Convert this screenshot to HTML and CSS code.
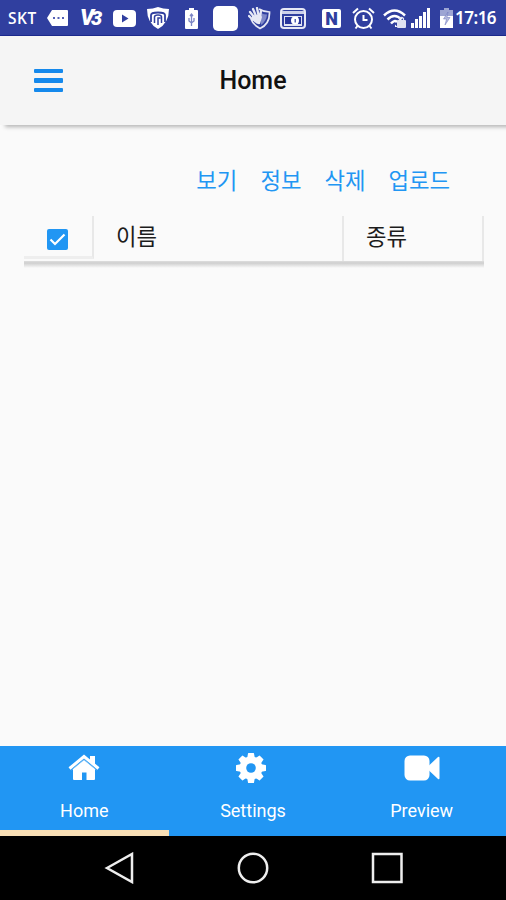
FILE: index.html
```html
<!DOCTYPE html>
<html lang="ko">
<head>
    <meta charset="UTF-8">
    <meta name="viewport" content="width=device-width, initial-scale=1.0">
    <title>Home</title>
    <link rel="stylesheet" href="styles.css">
</head>
<body>
    <div class="status-bar">
        <span class="carrier">SKT</span>
        <svg class="i-msg" width="21" height="18" viewBox="0 0 21 18"><path d="M0 9L5 1H20Q21 1 21 2V16Q21 17 20 17H5Z" fill="#fff"/><path d="M6 8h2v2H6zM10.500 8h2v2h-2zM15 8h2v2h-2z" fill="#5360b5"/></svg>
        <span class="i-v3">V<b>3</b></span>
        <svg class="i-tube" width="23" height="17" viewBox="0 0 23 17"><rect width="23" height="17" rx="4" fill="#fff"/><path d="M9 4.500L15.500 8.500L9 12.500Z" fill="#303f9f"/></svg>
        <svg class="i-guard" width="24" height="24" viewBox="0 0 24 24"><path d="M1 3Q7 3 12 1Q17 3 23 3Q23 17 12 23Q1 17 1 3Z" fill="#fff"/><path d="M5 16V9Q5 6.500 12 6.500T19 9V16" fill="none" stroke="#303f9f" stroke-width="1.800"/><path d="M8.500 17V11q0-2 3.500-2t3.500 2v6M12 19v-7h2.500" fill="none" stroke="#303f9f" stroke-width="1.500"/></svg>
        <svg class="i-usb" width="13" height="21" viewBox="0 0 13 21"><path d="M4 0h5v2h3q1 0 1 1v17q0 1-1 1H1q-1 0-1-1V3q0-1 1-1h3z" fill="#fff"/><path d="M6.500 6v12M4 10v3l2.500 2l2.500-2v-3M5 8l1.500-2L8 8" fill="none" stroke="#7c86c5" stroke-width="1.300"/></svg>
        <span class="i-square"></span>
        <svg class="i-hand" width="23" height="23" viewBox="0 0 23 23"><path d="M11 2Q16 5 21.500 5Q22 17 12 21.500Q5 18 3 12" fill="none" stroke="#e6e8f5" stroke-width="1.700"/><path d="M13 6Q16 7.500 19 7.500Q18.500 14 13 18Z" fill="#7e88c8"/><path d="M2 5L6 10M5 2L8 9M9 1L10.500 8M1 9L5 13M13 4L12 10" stroke="#e6e8f5" stroke-width="2.300" stroke-linecap="round"/><path d="M4 9L12 7L14 10L12 17Q8 18 4 12Z" fill="#e6e8f5"/></svg>
        <svg class="i-card" width="26" height="21" viewBox="0 0 26 21"><rect x="1" y="1" width="24" height="19" rx="3" fill="#303f9f" stroke="#e6e8f5" stroke-width="2"/><path d="M2 3h22v3H2z" fill="#cdd1ea"/><path d="M4 8h18v10H4z" fill="#dfe2f2"/><path d="M5 9h8v7H5zM18 9h3v7h-3z" fill="#26339a"/><circle cx="15" cy="12.500" r="4" fill="#fff"/><path d="M14.500 11h1.500v3.500h-1.500z" fill="#5562b5"/></svg>
        <span class="i-nfc">N</span>
        <svg class="i-alarm" width="23" height="23" viewBox="0 0 23 23" fill="none" stroke="#fff" stroke-width="2"><circle cx="11.500" cy="12.500" r="8.500"/><path d="M1 6L6 1.500M22 6L17 1.500M11.500 8v5h4M5.500 19l-2 2.500M17.500 19l2 2.500"/></svg>
        <svg class="i-wifi" width="24" height="19" viewBox="0 0 24 19" fill="none" stroke="#fff" stroke-width="2.500"><path d="M1 6.500Q11.500-3.500 22 6.500M4.500 10.500Q11.500 3.500 18.500 10.500M8 14.500Q11.500 10.500 14 13"/><path d="M12 15.500L14.500 18H12z" fill="#fff" stroke="none"/><rect x="14" y="11" width="9" height="8" rx="1" fill="#dfe2f2" stroke="none"/><path d="M16.500 11V9.500q2-2 4 0V11" stroke="#dfe2f2" stroke-width="1.200"/></svg>
        <svg class="i-signal" width="19" height="20" viewBox="0 0 19 20" fill="#fff"><path d="M0 15h3v5H0zM4 11h3v9H4zM8 8h3v12H8zM12 4h3v16h-3zM16 0h3v20h-3z"/></svg>
        <svg class="i-batt" width="13" height="20" viewBox="0 0 13 20"><path d="M4 0h5v2h4v7H0V2h4z" fill="#9da5d3"/><path d="M0 8h13v12H0z" fill="#fff"/><path d="M8 4L3.500 11H6.500L5 17L10 9.500H7Z" fill="#b8bddd" stroke="#6873bd" stroke-width=".5"/></svg>
        <span class="clock">17:16</span>
    </div>

    <div class="header">
        <div class="menu"><span></span><span></span><span></span></div>
        <h1>Home</h1>
    </div>

    <div class="content">
        <div class="actions">
            <a>보기</a>
            <a>정보</a>
            <a>삭제</a>
            <a>업로드</a>
        </div>
        <div class="table-head">
            <div class="cell check-cell">
                <svg width="21" height="21" viewBox="0 0 21 21"><rect width="21" height="21" rx="2" fill="#2196f3"/><path d="M3.500 10.500L8 15L17.500 5.500" fill="none" stroke="#fff" stroke-width="2.200"/></svg>
            </div>
            <div class="cell name-cell">이름</div>
            <div class="cell type-cell">종류</div>
        </div>
        <div class="table-shadow"></div>
    </div>

    <div class="tabs">
        <div class="tab active">
            <svg width="32" height="32" viewBox="0 0 32 32" fill="#fff"><path d="M16 8L27 17V27Q27 28 26 28H18.500V20.500H14V28H6Q5 28 5 27V17Z"/><path d="M1.500 16.500L16 4.500L30.500 16.500" fill="none" stroke="#fff" stroke-width="3"/><path d="M22 4h5v10l-5-4z"/><path d="M3.500 18L16 7.700L28.500 18" fill="none" stroke="#90cbf9" stroke-width=".7"/></svg>
            <span>Home</span>
        </div>
        <div class="tab">
            <svg class="gear" width="32" height="32" viewBox="0 0 32 32"><g fill="#fff"><circle cx="16" cy="16" r="11.500"/><path id="t" d="M13 1.500Q13 1 13.500 1h5Q19 1 19 1.500L20 7H12Z"/><use href="#t" transform="rotate(45 16 16)"/><use href="#t" transform="rotate(90 16 16)"/><use href="#t" transform="rotate(135 16 16)"/><use href="#t" transform="rotate(180 16 16)"/><use href="#t" transform="rotate(225 16 16)"/><use href="#t" transform="rotate(270 16 16)"/><use href="#t" transform="rotate(315 16 16)"/></g><circle cx="16" cy="16" r="4.800" fill="#2196f3"/></svg>
            <span>Settings</span>
        </div>
        <div class="tab">
            <svg width="36" height="32" viewBox="0 0 36 32" fill="#fff"><rect x="0.500" y="3.500" width="25" height="25" rx="5.500"/><path d="M25 13.500L34 5Q35.500 4 35.500 6V26Q35.500 28 34 27L25 18.500Z"/></svg>
            <span>Preview</span>
        </div>
    </div>

    <div class="nav-bar">
        <svg width="30" height="32" viewBox="0 0 30 32"><path d="M3 16L28 2V30Z"/></svg>
        <svg width="32" height="32" viewBox="0 0 32 32"><circle cx="16" cy="16" r="14.200"/></svg>
        <svg width="32" height="32" viewBox="0 0 32 32"><rect x="2" y="2" width="28.500" height="28"/></svg>
    </div>
</body>
</html>
```
FILE: styles.css
```css
* { box-sizing: border-box; }
body { margin: 0; height: 900px; display: flex; flex-direction: column; overflow: hidden; background: #fafafa; color: #1c1c1c; font-family: Roboto, "Noto Sans CJK KR", sans-serif; }
svg { display: block; flex: none; }

.status-bar { height: 36px; flex: none; display: flex; align-items: center; padding: 1px 0 0 8px; background: #303f9f; border-bottom: 1px solid #1c2a91; color: #fff; }
.status-bar > * { flex: none; }
.carrier { width: 30px; font: 600 15.500px/20px "Open Sans", sans-serif; letter-spacing: .6px; }
.i-msg { margin-left: 9px; }
.i-v3 { width: 22px; margin-left: 12px; font: italic 900 22px/22px Roboto, sans-serif; letter-spacing: -3px; }
.i-v3 b { font-size: 20px; }
.i-tube { margin-left: 11px; }
.i-guard { margin-left: 10px; }
.i-usb { margin-left: 15px; }
.i-square { width: 25px; height: 25px; margin-left: 15px; border-radius: 5px; background: #fff; }
.i-hand { margin-left: 10px; }
.i-card { margin-left: 9px; }
.i-nfc { width: 19px; height: 19px; margin-left: 16px; border-radius: 2px; background: #fff; color: #303f9f; font: 900 18px/19px Roboto, sans-serif; text-align: center; }
.i-alarm { margin-left: 11px; }
.i-wifi { margin-left: 8px; }
.i-signal { margin-left: 4px; }
.i-batt { margin-left: 10px; }
.clock { margin-left: 2px; font: 600 17px/20px "Noto Sans", sans-serif; letter-spacing: -.5px; }

.header { height: 89px; flex: none; display: grid; grid-template-columns: 1fr auto 1fr; align-items: center; padding: 0 0 0 34px; background: #f5f5f5; box-shadow: 5px 2px 4px rgba(0,0,0,.28); }
.menu { display: grid; gap: 5px; width: 29px; }
.menu span { height: 4.500px; border-radius: 1px; background: #1589ec; }
.header h1 { margin: 0 34px 0 0; font-size: 25px; font-weight: 500; color: #111; }

.content { flex: 1; padding: 41px 22px 0 24px; }
.actions { display: flex; justify-content: flex-end; gap: 23px; padding-right: 34px; height: 50px; font-size: 22.300px; line-height: 31px; color: #2196f3; }
.table-head { display: flex; height: 45px; font-size: 22.300px; line-height: 43px; }
.table-shadow { height: 7px; background: linear-gradient(#ddd, #cfcfcf 30%, #fafafa); }
.cell { border-right: 2px solid #e8e8e8; }
.check-cell { width: 70px; height: 43px; padding: 13px 0 0 23px; border-bottom: 3px solid #eee; }
.name-cell { width: 250px; padding-left: 22px; }
.type-cell { flex: 1; padding-left: 22px; }

.tabs { height: 90px; flex: none; display: grid; grid-template-columns: repeat(3, 1fr); background: #2196f3; color: #fff; }
.tab { display: flex; flex-direction: column; align-items: center; padding-top: 6px; font-size: 18px; line-height: 22px; border-bottom: 6px solid transparent; }
.tab span { margin-top: 16px; }
.tab .gear { margin-right: 4px; }
.tab.active { border-bottom-color: #f9dfb5; }

.nav-bar { height: 64px; flex: none; display: flex; justify-content: space-between; align-items: center; padding: 0 103px 0 104px; background: #000; }
.nav-bar svg { fill: none; stroke: #eee; stroke-width: 2.500; }
```
